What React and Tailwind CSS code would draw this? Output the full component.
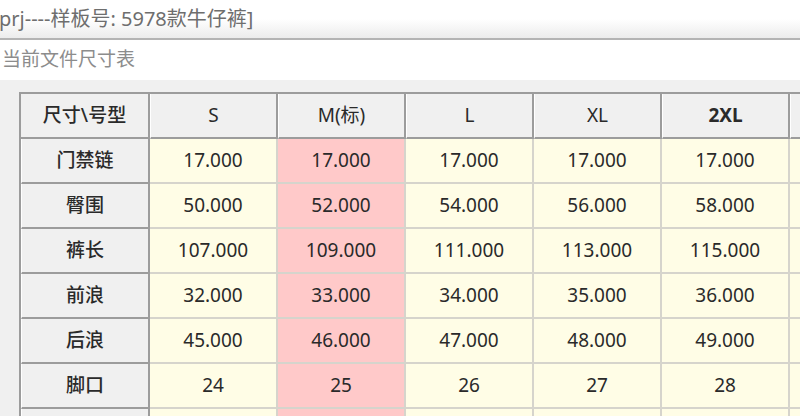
import React from 'react';

const sizes = ['S', 'M(标)', 'L', 'XL', '2XL', ''];

const rows = [
  { name: '门禁链', values: ['17.000', '17.000', '17.000', '17.000', '17.000', ''] },
  { name: '臀围', values: ['50.000', '52.000', '54.000', '56.000', '58.000', ''] },
  { name: '裤长', values: ['107.000', '109.000', '111.000', '113.000', '115.000', ''] },
  { name: '前浪', values: ['32.000', '33.000', '34.000', '35.000', '36.000', ''] },
  { name: '后浪', values: ['45.000', '46.000', '47.000', '48.000', '49.000', ''] },
  { name: '脚口', values: ['24', '25', '26', '27', '28', ''] },
  { name: '', values: ['', '', '', '', '', ''] },
];

const font = { fontFamily: '"Noto Sans", "Noto Sans CJK SC", sans-serif' };

export default function App() {
  return (
    <div className="w-[800px] h-[416px] overflow-hidden bg-white flex flex-col" style={font}>
      {/* window title */}
      <div className="h-[40px] shrink-0 bg-gradient-to-b from-white via-white to-[#ececec] border-b-2 border-[#b4b4b4] flex items-center">
        <span className="-ml-[1px] text-[20px] text-[#6e6e6e] whitespace-nowrap">prj----样板号: 5978款牛仔裤]</span>
      </div>

      <div className="h-[40px] shrink-0 flex items-center pl-[2px] pb-[1px]">
        <span className="text-[19px] text-[#8c8c8c]">当前文件尺寸表</span>
      </div>

      {/* size table panel */}
      <div className="flex-1 bg-[#f0f0f0] pt-[12px] pl-[19px] overflow-hidden">
        <div className="inline-flex flex-col border-l-2 border-t-2 border-[#9c9c9c] text-[19px] text-[#2a2a2a]">
          <div className="flex h-[45px]">
            <div className="w-[129px] shrink-0 flex items-center justify-center bg-[#f0f0f0] border-r-2 border-b-2 border-[#9c9c9c] font-medium">
              尺寸\号型
            </div>
            {sizes.map((s, i) => (
              <div
                key={i}
                className={`w-[128px] shrink-0 flex items-center justify-center bg-[#f0f0f0] border-r-2 border-b-2 border-[#9c9c9c] border-l border-l-white ${s === '2XL' ? 'font-bold' : ''}`}
              >
                {s}
              </div>
            ))}
          </div>
          {rows.map((r, ri) => (
            <div key={ri} className="flex h-[45px]">
              <div className="w-[129px] shrink-0 flex items-center justify-center bg-[#f0f0f0] border-r-2 border-b-2 border-[#9c9c9c] border-l border-l-white font-medium">
                {r.name}
              </div>
              {r.values.map((v, vi) => (
                <div
                  key={vi}
                  className={`w-[128px] shrink-0 flex items-center justify-center border-r-2 border-b-2 border-[#d6d4cc] ${vi === 1 ? 'bg-[#ffc9c9]' : 'bg-[#fffde6]'}`}
                >
                  {v}
                </div>
              ))}
            </div>
          ))}
        </div>
      </div>
    </div>
  );
}
